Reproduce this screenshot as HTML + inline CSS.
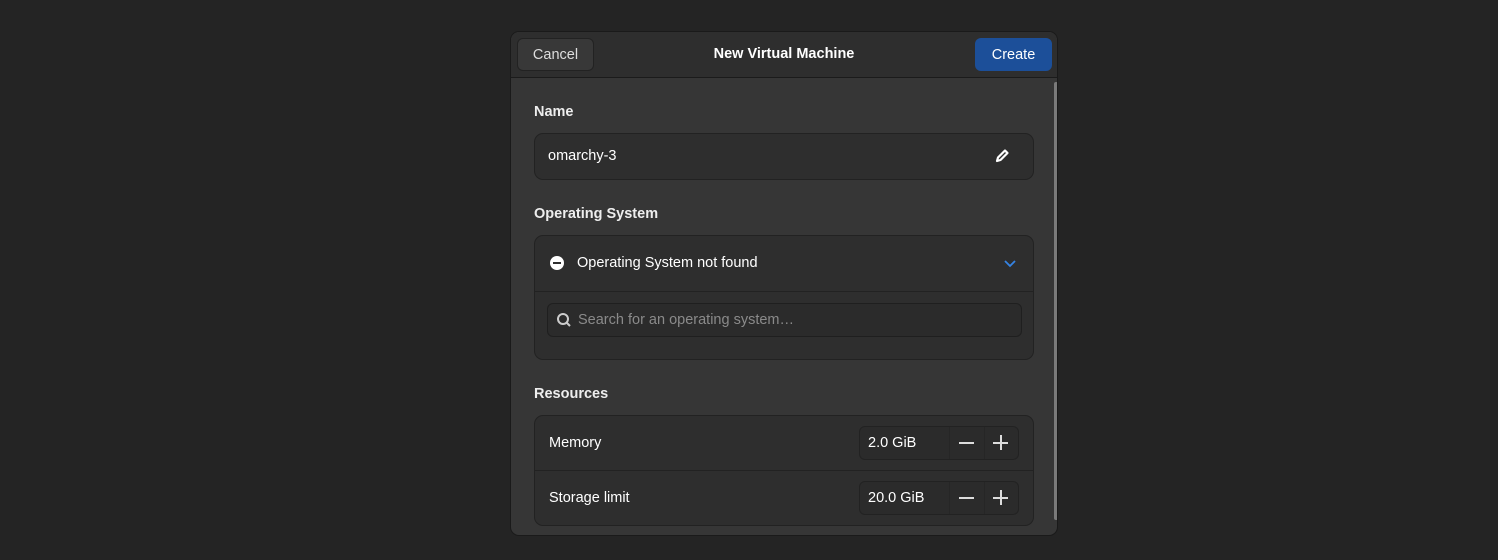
<!DOCTYPE html>
<html><head><style>
*{box-sizing:border-box;margin:0;padding:0}
body{width:1498px;height:560px;background:#242424;font-family:"Liberation Sans",sans-serif;color:#fff;position:relative;overflow:hidden;font-size:14.5px}
.dlg{position:absolute;left:510px;top:31px;width:548px;height:505px;background:#363636;border:1px solid #1a1a1a;border-radius:9px;overflow:hidden}
.hdr{position:absolute;left:0;top:0;width:100%;height:46px;background:#2e2e2e;border-bottom:1px solid #1b1b1b}
.btn{position:absolute;top:6px;height:33px;border-radius:6px;font-size:14.5px;display:flex;align-items:center;justify-content:center}
.title{position:absolute;left:0;right:0;top:14px;text-align:center;font-weight:bold;font-size:14.5px}
.lbl{position:absolute;left:23px;font-weight:bold;font-size:14.5px;color:#eee}
.card{position:absolute;left:23px;width:500px;background:#2e2e2e;border:1px solid #222;border-radius:9px}
.t{position:absolute;font-size:14.5px}
.spin{position:absolute;left:324px;width:160px;height:34px;border:1px solid #222;border-radius:6px;background:#2b2b2b}
.spin .v{position:absolute;left:8px;top:8px}
.spin .d{position:absolute;top:0;width:1px;height:32px;background:#262626}
.sb{position:absolute;left:543px;top:50px;width:4px;height:438px;background:#7a7a7a;border-radius:2px}
</style></head><body>
<div class="dlg">
 <div class="hdr">
  <div class="btn" style="left:6px;width:77px;background:#383838;border:1px solid #222;color:#ddd">Cancel</div>
  <div class="title">New Virtual Machine</div>
  <div class="btn" style="left:464px;width:77px;background:#1c4f99">Create</div>
 </div>
 <div class="sb"></div>
 <div class="lbl" style="top:72px">Name</div>
 <div class="card" style="top:101px;height:47px">
  <div class="t" style="left:13px;top:14px">omarchy-3</div>
  <svg style="position:absolute;left:459px;top:14px" width="16" height="16" viewBox="0 0 16 16"><path d="M3 13l1-3.5L11 2.5l2.5 2.5L6.5 12z" fill="none" stroke="#fff" stroke-width="2.2" stroke-linejoin="round"/></svg>
 </div>
 <div class="lbl" style="top:174px">Operating System</div>
 <div class="card" style="top:203px;height:125px">
  <svg style="position:absolute;left:14px;top:19px" width="16" height="16"><circle cx="8" cy="8" r="7" fill="#fff"/><rect x="4" y="7" width="8" height="2" fill="#2e2e2e"/></svg>
  <div class="t" style="left:42px;top:19px">Operating System not found</div>
  <svg style="position:absolute;left:468px;top:22px" width="14" height="10"><path d="M2 3l5 5 5-5" fill="none" stroke="#3584e4" stroke-width="1.8"/></svg>
  <div style="position:absolute;left:0;top:55px;width:100%;height:1px;background:#222"></div>
  <div style="position:absolute;left:12px;top:67px;width:475px;height:34px;background:#2b2b2b;border:1px solid #1f1f1f;border-radius:6px">
   <svg style="position:absolute;left:8px;top:8px" width="16" height="16"><circle cx="7" cy="7" r="5" fill="none" stroke="#ccc" stroke-width="2"/><path d="M10.5 10.5L14 14" stroke="#ccc" stroke-width="2"/></svg>
   <div class="t" style="left:30px;top:8px;color:#8a8a8a">Search for an operating system…</div>
  </div>
 </div>
 <div class="lbl" style="top:354px">Resources</div>
 <div class="card" style="top:383px;height:111px">
  <div class="t" style="left:14px;top:19px">Memory</div>
  <div class="spin" style="top:10px"><div class="v">2.0 GiB</div><div class="d" style="left:89px"></div><div class="d" style="left:124px"></div>
   <div style="position:absolute;left:99px;top:15px;width:15px;height:2px;background:#ddd"></div>
   <div style="position:absolute;left:133px;top:15px;width:15px;height:2px;background:#ddd"></div>
   <div style="position:absolute;left:140px;top:8px;width:2px;height:15px;background:#ddd"></div></div>
  <div style="position:absolute;left:0;top:54px;width:100%;height:1px;background:#222"></div>
  <div class="t" style="left:14px;top:74px">Storage limit</div>
  <div class="spin" style="top:65px"><div class="v">20.0 GiB</div><div class="d" style="left:89px"></div><div class="d" style="left:124px"></div>
   <div style="position:absolute;left:99px;top:15px;width:15px;height:2px;background:#ddd"></div>
   <div style="position:absolute;left:133px;top:15px;width:15px;height:2px;background:#ddd"></div>
   <div style="position:absolute;left:140px;top:8px;width:2px;height:15px;background:#ddd"></div></div>
 </div>
</div>
</body></html>
